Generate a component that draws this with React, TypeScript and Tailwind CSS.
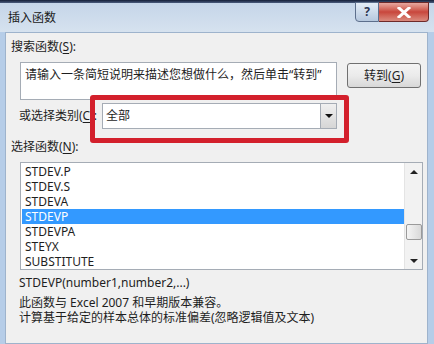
import React from "react";

const font = { fontFamily: '"Noto Sans", "Noto Sans CJK SC", sans-serif' };

const rows = ["STDEV.P", "STDEV.S", "STDEVA", "STDEVP", "STDEVPA", "STEYX", "SUBSTITUTE"];

function Mn({ children }: { children: React.ReactNode }) {
  return <span className="underline underline-offset-2">{children}</span>;
}

function TitleBar() {
  return (
    <div className="relative h-[32px] flex items-center bg-gradient-to-b from-[#c3d4e8] to-[#d6e2ef]">
      <div className="absolute inset-x-0 top-0 h-[3px] bg-gradient-to-b from-[#141f38] to-[#4a5c7e]" />
      <span className="ml-[8px] mt-[3px] text-[12px] text-[#1a1a1a]">插入函数</span>
      <div className="absolute top-[2px] right-[5px] flex">
        <div className="w-[24px] h-[20px] rounded-bl-[4px] border border-[#5d6f8c] bg-gradient-to-b from-[#e4edf7] to-[#b6c8de] flex items-center justify-center text-[12px] font-bold text-[#2b3550]">
          ?
        </div>
        <div className="w-[50px] h-[20px] rounded-br-[4px] border border-l-0 border-[#6e2a2a] bg-gradient-to-b from-[#e6a8a0] via-[#c8463c] to-[#d98a7e] flex items-center justify-center">
          <svg width="14" height="11" viewBox="0 0 14 11">
            <path d="M2 1 L12 10 M12 1 L2 10" stroke="#fff" strokeWidth="3" strokeLinecap="square" />
          </svg>
        </div>
      </div>
    </div>
  );
}

function Scrollbar() {
  return (
    <div className="w-[18px] h-full flex flex-col items-center bg-[#f2f2f2] border-l border-[#e4e4e4]">
      <div className="h-[16px] w-full flex items-center justify-center">
        <svg width="8" height="5" viewBox="0 0 8 5"><path d="M0 5 L4 1 L8 5 Z" fill="#222" /></svg>
      </div>
      <div className="h-[45px]" />
      <div className="w-[16px] h-[16px] rounded-[2px] border border-[#9a9a9a] bg-gradient-to-r from-[#f4f4f4] to-[#d9d9d9]" />
      <div className="flex-1" />
      <div className="h-[16px] w-full flex items-center justify-center">
        <svg width="8" height="5" viewBox="0 0 8 5"><path d="M0 0 L4 4 L8 0 Z" fill="#222" /></svg>
      </div>
    </div>
  );
}

export default function App() {
  return (
    <div className="w-[434px] h-[344px] overflow-hidden flex flex-col bg-[#b6cde8] text-[#1e1e1e]" style={font}>
      <TitleBar />
      <div className="relative flex-1 mx-[5px] mr-[6px] border border-[#9eb3cc] bg-[#f0f0f0] text-[12px] leading-[16px]">
        <div className="mt-[6px] pl-[5px] h-[16px]">
          搜索函数(<Mn>S</Mn>):
        </div>
        <div className="mt-[7px] flex items-start">
          <div className="ml-[14px] w-[317px] h-[38px] border border-[#a5acb5] bg-white pl-[4px] pt-[4px]">
            请输入一条简短说明来描述您想做什么，然后单击“转到”
          </div>
          <div className="ml-[10px] mt-[1px] w-[74px] h-[25px] rounded-[3px] border border-[#707070] bg-gradient-to-b from-[#f4f4f4] via-[#ebebeb] to-[#d8d8d8] flex items-center justify-center">
            转到(<Mn>G</Mn>)
          </div>
        </div>
        <div className="mt-[3px] flex items-center h-[26px]">
          <span className="ml-[13px] w-[83px]">
            或选择类别(<Mn>C</Mn>):
          </span>
          <div className="w-[235px] h-[26px] border border-[#a5acb5] bg-white flex items-center">
            <span className="flex-1 pl-[3px]">全部</span>
            <div className="w-[16px] h-[24px] border-l border-[#a5acb5] bg-gradient-to-b from-[#f0f0f0] to-[#d6d6d6] flex items-center justify-center">
              <svg width="8" height="5" viewBox="0 0 8 5"><path d="M0 0 L4 4 L8 0 Z" fill="#111" /></svg>
            </div>
          </div>
        </div>
        <div className="mt-[10px] pl-[5px] h-[16px]">
          选择函数(<Mn>N</Mn>):
        </div>
        <div className="mt-[7px] ml-[14px] w-[403px] h-[108px] border border-[#a5acb5] bg-white flex overflow-hidden">
          <div className="flex-1 pt-[1px] pl-[1px]">
            {rows.map((r) => (
              <div
                key={r}
                className={`h-[15px] leading-[15px] pl-[3px] ${r === "STDEVP" ? "bg-[#3399ff] text-white" : ""}`}
              >
                {r}
              </div>
            ))}
          </div>
          <Scrollbar />
        </div>
        <div className="mt-[6px] pl-[13px] h-[14px] leading-[14px]">STDEVP(number1,number2,...)</div>
        <div className="mt-[5px] pl-[13px] leading-[15px]">
          <div>此函数与 Excel 2007 和早期版本兼容。</div>
          <div>计算基于给定的样本总体的标准偏差(忽略逻辑值及文本)</div>
        </div>
        {/* red annotation box */}
        <div className="absolute left-[84px] top-[62px] w-[259px] h-[48px] rounded-[3px] border-[5px] border-[#d3202c]" />
      </div>
    </div>
  );
}
